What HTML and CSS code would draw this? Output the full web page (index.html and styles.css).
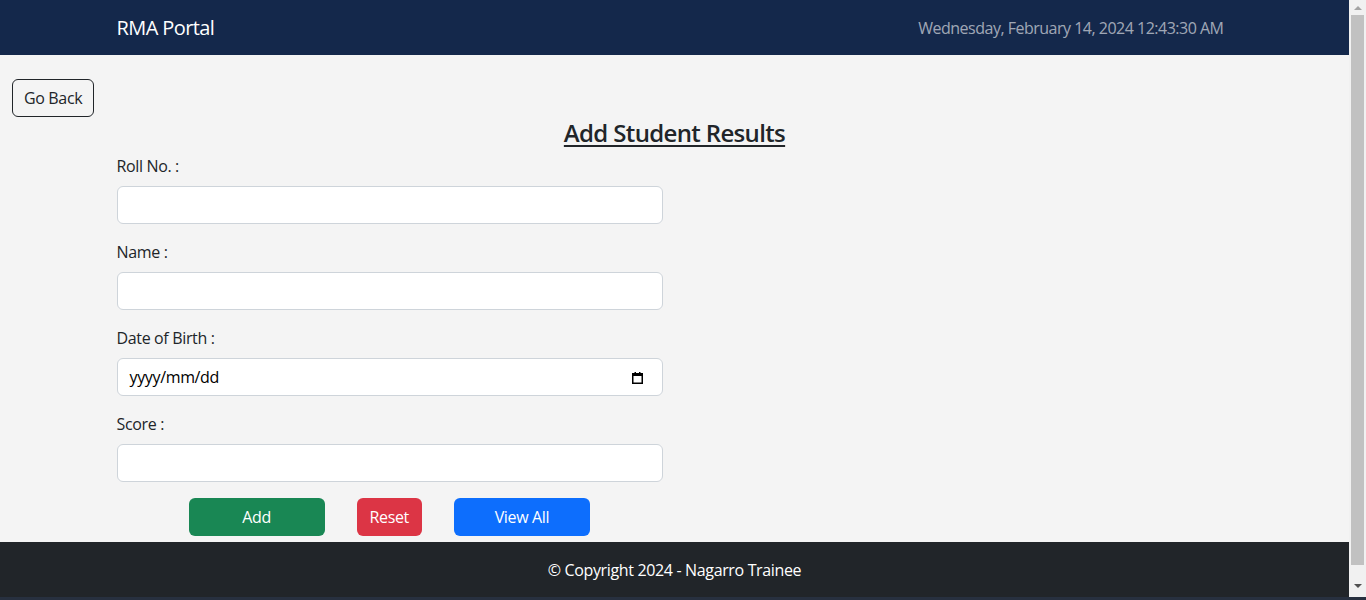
FILE: index.html
```html
<!DOCTYPE html>
<html lang="en">
<head>
<meta charset="utf-8">
<title>RMA Portal</title>
<link rel="stylesheet" href="styles.css">
</head>
<body>
<header class="topbar">
  <div class="container topbar-inner">
    <span class="brand">RMA Portal</span>
    <span class="clock">Wednesday, February 14, 2024 12:43:30 AM</span>
  </div>
</header>
<main class="page">
  <div class="back-row"><button class="btn btn-outline">Go Back</button></div>
  <h3 class="title">Add Student Results</h3>
  <div class="container">
    <form class="result-form">
      <div class="field">
        <label class="field-label">Roll No. :</label>
        <input class="input" type="text">
      </div>
      <div class="field">
        <label class="field-label">Name :</label>
        <input class="input" type="text">
      </div>
      <div class="field">
        <label class="field-label">Date of Birth :</label>
        <div class="input date-input">
          <span class="date-text">yyyy/mm/dd</span>
          <svg class="cal-icon" width="11" height="12" viewBox="0 0 11 12"><rect x="0.75" y="1.75" width="9.5" height="9.5" fill="none" stroke="#000" stroke-width="1.5"/><rect x="0" y="1" width="11" height="3" fill="#000"/><rect x="2.5" y="0" width="1.5" height="2" fill="#000"/><rect x="7" y="0" width="1.5" height="2" fill="#000"/></svg>
        </div>
      </div>
      <div class="field">
        <label class="field-label">Score :</label>
        <input class="input" type="text">
      </div>
      <div class="actions">
        <button type="button" class="btn btn-wide btn-green">Add</button>
        <button type="button" class="btn btn-red">Reset</button>
        <button type="button" class="btn btn-wide btn-blue">View All</button>
      </div>
    </form>
  </div>
</main>
<footer class="footer">© Copyright 2024 - Nagarro Trainee</footer>
<div class="after"></div>
<div class="scrollbar" aria-hidden="true">
  <div class="sb-btn"><span class="sb-arrow-up"></span></div>
  <div class="sb-track"><div class="sb-thumb"></div></div>
  <div class="sb-btn"><span class="sb-arrow-down"></span></div>
</div>
<div class="screen-edge"></div>
</body>
</html>
```
FILE: styles.css
```css
* { box-sizing: border-box; }
body {
  margin: 0 17px 0 0;
  background: #f4f4f4;
  color: #212529;
  font-family: "Open Sans", "Noto Sans", sans-serif;
  font-size: 16px;
  line-height: 24px;
  letter-spacing: -0.35px;
}
.container {
  width: 1140px;
  margin: 0 auto;
  padding: 0 12px;
}
.topbar {
  background: #14284b;
  height: 55px;
}
.topbar-inner {
  height: 55px;
  display: flex;
  align-items: center;
  justify-content: space-between;
}
.brand {
  color: #fff;
  font-size: 20px;
  line-height: 30px;
  letter-spacing: -0.6px;
}
.clock {
  color: rgba(255,255,255,0.6);
  font-size: 16px;
  letter-spacing: -0.5px;
  padding-right: 9px;
}
.page {
  padding-top: 24px;
  padding-bottom: 6px;
}
.back-row { padding-left: 12px; }
.btn {
  font-family: inherit;
  font-size: 16px;
  line-height: 24px;
  letter-spacing: inherit;
  padding: 6px 12px;
  border-radius: 6px;
  border: 1px solid transparent;
  cursor: pointer;
}
.btn-outline {
  background: transparent;
  border-color: #212529;
  color: #212529;
  padding: 6px 11px;
}
.title {
  margin: 1px 0 7px;
  text-align: center;
  font-size: 24px;
  font-weight: 600;
  line-height: 29px;
  letter-spacing: -0.65px;
  text-decoration: underline;
  text-decoration-thickness: 2px;
  text-underline-offset: 3px;
}
.result-form { width: 546px; }
.field { margin-bottom: 16px; }
.field-label {
  display: block;
  padding-top: 0;
  margin-bottom: 8px;
}
.input {
  display: block;
  width: 100%;
  height: 38px;
  padding: 6px 12px;
  border: 1px solid #ced4da;
  border-radius: 6px;
  background: #fff;
  font-family: inherit;
  font-size: 16px;
  color: #212529;
}
.date-input {
  display: flex;
  align-items: center;
  justify-content: space-between;
  padding-right: 19px;
}
.date-text { color: #000; }
.cal-icon { display: block; margin-top: 1px; }
.actions {
  display: flex;
  gap: 32px;
  padding-left: 72px;
}
.btn-wide { width: 136px; }
.btn-green { background: #198754; color: #fff; }
.btn-red { background: #dc3545; color: #fff; }
.btn-blue { background: #0d6efd; color: #fff; }
.footer {
  background: #212529;
  color: #fff;
  height: 55px;
  display: flex;
  align-items: center;
  justify-content: center;
}
.after {
  background: #14284b;
  height: 110px;
}
.scrollbar {
  position: fixed;
  top: 0;
  right: 0;
  width: 17px;
  height: 597px;
  background: #f1f1f1;
  display: flex;
  flex-direction: column;
}
.sb-btn {
  height: 15px;
  display: flex;
  align-items: center;
  justify-content: center;
}
.sb-btn:last-child { height: 32px; align-items: flex-start; padding-top: 19px; }
.sb-arrow-up {
  width: 0; height: 0;
  border-left: 4px solid transparent;
  border-right: 4px solid transparent;
  border-bottom: 4px solid #a3a3a3;
}
.sb-arrow-down {
  width: 0; height: 0;
  border-left: 4px solid transparent;
  border-right: 4px solid transparent;
  border-top: 4px solid #505050;
}
.sb-track {
  flex: 1;
  padding: 0 2px;
}
.sb-thumb {
  height: 100%;
  background: #c1c1c1;
}
.screen-edge {
  position: fixed;
  left: 0;
  right: 0;
  bottom: 0;
  height: 3px;
  background: #27303f;
}
```
